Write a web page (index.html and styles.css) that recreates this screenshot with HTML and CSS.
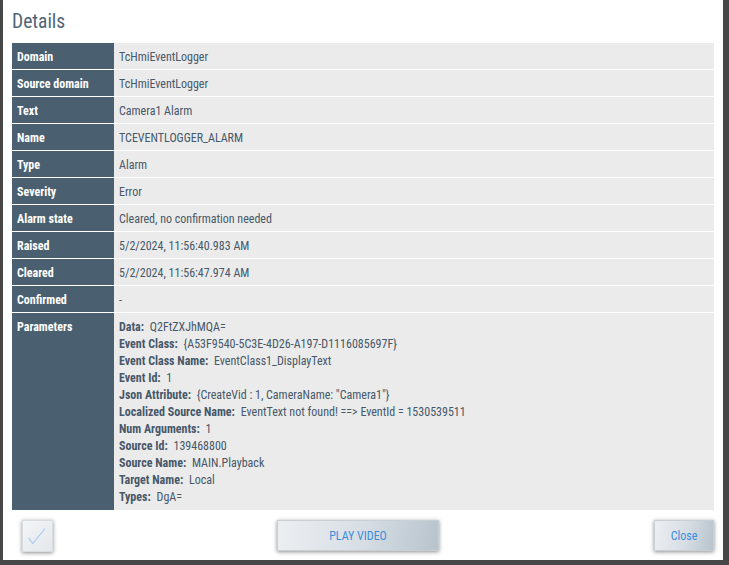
FILE: index.html
```html
<!DOCTYPE html>
<html>
<head>
<meta charset="utf-8">
<link rel="stylesheet" href="styles.css">
</head>
<body>
<div class="dialog">
  <h1 class="title">Details</h1>
  <div class="table">
    <div class="row"><div class="label">Domain</div><div class="value">TcHmiEventLogger</div></div>
    <div class="row"><div class="label">Source domain</div><div class="value">TcHmiEventLogger</div></div>
    <div class="row"><div class="label">Text</div><div class="value">Camera1 Alarm</div></div>
    <div class="row"><div class="label">Name</div><div class="value">TCEVENTLOGGER_ALARM</div></div>
    <div class="row"><div class="label">Type</div><div class="value">Alarm</div></div>
    <div class="row"><div class="label">Severity</div><div class="value">Error</div></div>
    <div class="row"><div class="label">Alarm state</div><div class="value">Cleared, no confirmation needed</div></div>
    <div class="row"><div class="label">Raised</div><div class="value">5/2/2024, 11:56:40.983 AM</div></div>
    <div class="row"><div class="label">Cleared</div><div class="value">5/2/2024, 11:56:47.974 AM</div></div>
    <div class="row"><div class="label">Confirmed</div><div class="value">-</div></div>
    <div class="row params">
      <div class="label">Parameters</div>
      <div class="value">
        <div class="param"><b>Data:</b> Q2FtZXJhMQA=</div>
        <div class="param"><b>Event Class:</b> {A53F9540-5C3E-4D26-A197-D1116085697F}</div>
        <div class="param"><b>Event Class Name:</b> EventClass1_DisplayText</div>
        <div class="param"><b>Event Id:</b> 1</div>
        <div class="param"><b>Json Attribute:</b> {CreateVid : 1, CameraName: "Camera1"}</div>
        <div class="param"><b>Localized Source Name:</b> EventText not found! ==&gt; EventId = 1530539511</div>
        <div class="param"><b>Num Arguments:</b> 1</div>
        <div class="param"><b>Source Id:</b> 139468800</div>
        <div class="param"><b>Source Name:</b> MAIN.Playback</div>
        <div class="param"><b>Target Name:</b> Local</div>
        <div class="param"><b>Types:</b> DgA=</div>
      </div>
    </div>
  </div>
  <div class="footer">
    <button class="btn check" aria-label="Confirm">
      <svg width="31" height="32" viewBox="0 0 31 32"><path d="M6 18 L10.5 24 L23.5 8" fill="none" stroke="#a9c9ee" stroke-width="1.2"/></svg>
    </button>
    <button class="btn play">PLAY VIDEO</button>
    <button class="btn close">Close</button>
  </div>
</div>
</body>
</html>
```
FILE: styles.css
```css
html, body {
  margin: 0;
  padding: 0;
}
body {
  background: #474747;
  width: 729px;
  height: 565px;
  overflow: hidden;
  font-family: "Roboto Condensed", "Liberation Sans Narrow", Roboto, sans-serif;
}
.dialog {
  margin-left: 3px;
  width: 720px;
  height: 560px;
  background: #ffffff;
  box-sizing: border-box;
  padding: 0 9px 0 9px;
  display: flex;
  flex-direction: column;
}
.title {
  margin: 0;
  padding-top: 10px;
  height: 43px;
  box-sizing: border-box;
  font-size: 19.5px;
  font-weight: 400;
  color: #506476;
  line-height: 24px;
}
.table {
  display: flex;
  flex-direction: column;
  gap: 1px;
}
.row {
  display: grid;
  grid-template-columns: 102px 1fr;
  height: 26px;
  font-size: 12px;
}
.label {
  background: #4a5f6f;
  color: #ffffff;
  font-weight: 700;
  padding: 1px 5px 0;
  display: flex;
  align-items: center;
}
.value {
  background: #ebebeb;
  color: #475869;
  padding: 1px 5px 0;
  display: flex;
  align-items: center;
}
.row.params {
  height: 197px;
}
.row.params .label {
  align-items: flex-start;
  padding-top: 6px;
  line-height: 17px;
}
.row.params .value {
  flex-direction: column;
  align-items: flex-start;
  padding-top: 6px;
  line-height: 17px;
}
.param b {
  font-weight: 700;
  margin-right: 3px;
}
.footer {
  display: flex;
  align-items: flex-start;
  padding-top: 10px;
}
.btn {
  border: 1px solid #c8d0d6;
  box-shadow: 0 1px 4px rgba(0, 0, 0, 0.45);
  background: linear-gradient(100deg, #eceff2 0%, #d6dde3 55%, #b7c3cd 100%);
  color: #3d8ddc;
  font-family: inherit;
  font-size: 12px;
  padding: 1px 0 0;
  cursor: pointer;
  height: 31px;
}
.check {
  width: 31px;
  height: 32px;
  margin-left: 10px;
  padding: 0;
  background: linear-gradient(135deg, #f3f5f7 0%, #e3e7eb 100%);
  border-color: #d8dde2;
  display: flex;
  align-items: center;
  justify-content: center;
}
.check svg {
  display: block;
}
.play {
  width: 162px;
  margin-left: 224px;
}
.close {
  width: 60px;
  margin-left: auto;
}
```
